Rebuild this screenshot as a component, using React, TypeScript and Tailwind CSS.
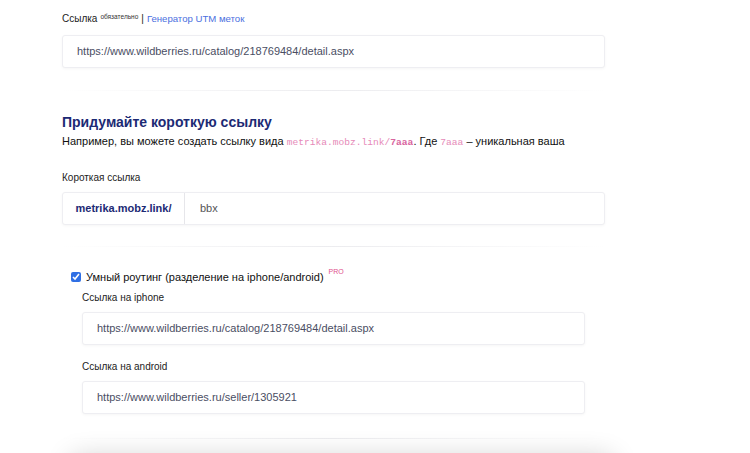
import React from "react";

const Divider = () => (
  <div className="h-px w-full bg-gradient-to-r from-transparent via-[#ececef] to-transparent" />
);

const Field = ({ value, className = "" }: { value: string; className?: string }) => (
  <div
    className={`flex h-[33px] items-center rounded-[3px] border border-[#eeeef2] bg-white px-[14px] text-[11px] text-[#4a4e63] shadow-[0_1px_3px_rgba(0,0,0,0.04)] ${className}`}
  >
    {value}
  </div>
);

export default function App() {
  return (
    <div
      className="relative h-[453px] w-[750px] overflow-hidden bg-white"
      style={{ fontFamily: '"Liberation Sans", Arial, sans-serif' }}
    >
      <div className="ml-[62px] w-[543px] pt-[12px]">
        <div className="flex h-[14px] items-baseline text-[10px] leading-[14px] text-[#222]">
          <span>Ссылка</span>
          <span className="relative -top-[3px] ml-[3px] text-[6.5px] text-[#333]">обязательно</span>
          <span className="mx-[3px]">|</span>
          <span className="text-[9.6px] text-[#4a6fe0]">Генератор UTM меток</span>
        </div>
        <Field className="mt-[9px]" value="https://www.wildberries.ru/catalog/218769484/detail.aspx" />

        <div className="mt-[22px]">
          <Divider />
        </div>

        <h2 className="mt-[21px] text-[14px] font-bold leading-[20px] text-[#1c2a74]">Придумайте короткую ссылку</h2>
        <p className="mt-[1px] whitespace-nowrap text-[11px] leading-[16px] text-[#111]">
          Например, вы можете создать ссылку вида{" "}
          <span className="font-['Liberation_Mono',monospace] text-[9.6px] text-[#e68ab8]">
            metrika.mobz.link/<b className="font-bold text-[#d9669f]">7aaa</b>
          </span>
          . Где{" "}
          <span className="font-['Liberation_Mono',monospace] text-[9.6px] text-[#e68ab8]">7aaa</span> – уникальная ваша
        </p>

        <div className="mt-[20px] text-[10px] leading-[14px] text-[#222]">Короткая ссылка</div>
        <div className="mt-[7px] flex h-[33px] rounded-[3px] border border-[#eeeef2] bg-white shadow-[0_1px_3px_rgba(0,0,0,0.04)]">
          <div className="flex w-[122px] items-center justify-center border-r border-[#e6e6ea] text-[11px] font-bold text-[#1c2a74]">
            metrika.mobz.link/
          </div>
          <div className="flex items-center px-[15px] text-[11px] text-[#555]">bbx</div>
        </div>

        <div className="mt-[21px]">
          <Divider />
        </div>

        <div className="mt-[22px] pl-[9px]">
          <label className="flex h-[16px] items-center text-[11px] leading-[16px] text-[#111]">
            <input type="checkbox" defaultChecked className="mr-[5px] h-[10px] w-[10px] accent-[#2f6fe4]" />
            Умный роутинг (разделение на iphone/android)
            <span className="relative -top-[5px] ml-[5px] text-[7px] text-[#e0508c]">PRO</span>
          </label>
        </div>

        <div className="ml-[20px] w-[503px]">
          <div className="mt-[6px] text-[10px] leading-[14px] text-[#222]">Ссылка на iphone</div>
          <Field className="mt-[7px]" value="https://www.wildberries.ru/catalog/218769484/detail.aspx" />
          <div className="mt-[15px] text-[10px] leading-[14px] text-[#222]">Ссылка на android</div>
          <Field className="mt-[7px]" value="https://www.wildberries.ru/seller/1305921" />
        </div>

        <div className="mt-[24px]">
          <Divider />
        </div>
      </div>

      <div className="absolute left-[72px] top-[458px] h-[100px] w-[540px] bg-white shadow-[0_0_26px_rgba(0,0,0,0.2)]" />
    </div>
  );
}
